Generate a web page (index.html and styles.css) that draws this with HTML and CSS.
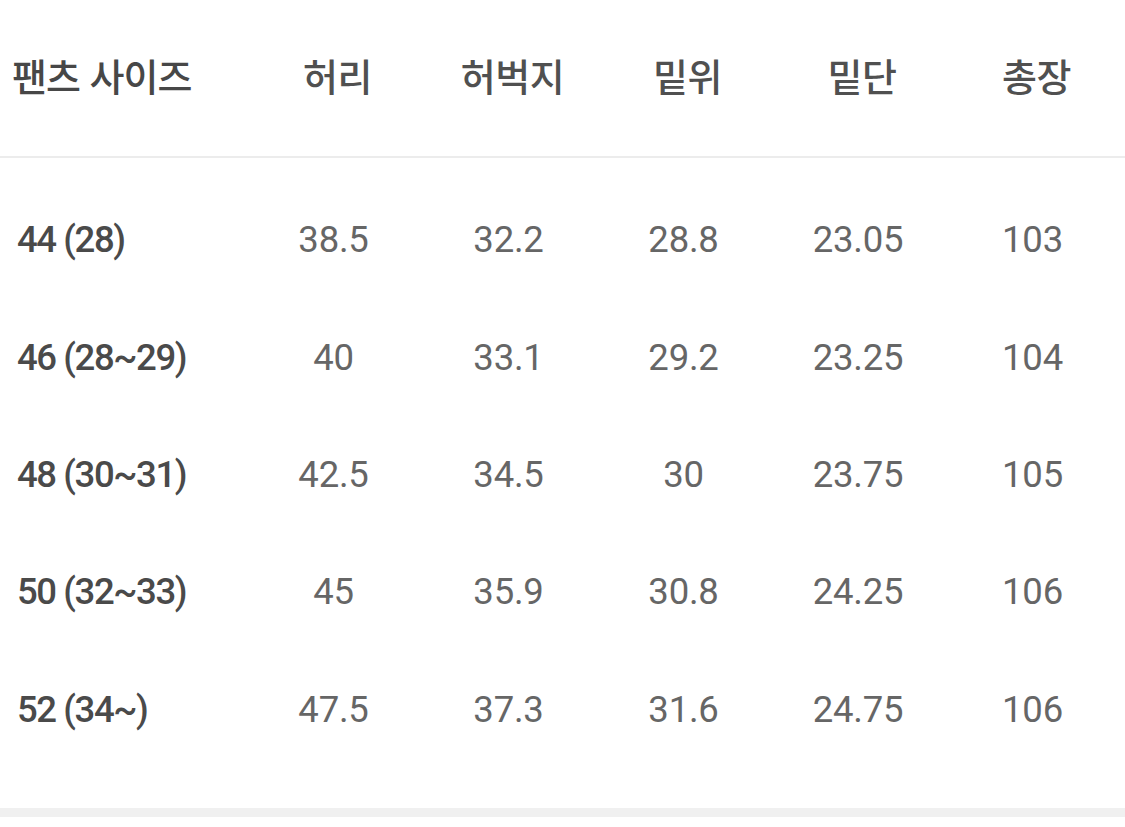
FILE: index.html
```html
<!DOCTYPE html>
<html lang="ko">
<head>
<meta charset="utf-8">
<title>팬츠 사이즈</title>
<link rel="stylesheet" href="styles.css">
</head>
<body>
<div class="page">
  <div class="size-table">
    <div class="row head">
      <div class="cell first">팬츠 사이즈</div>
      <div class="cell">허리</div>
      <div class="cell">허벅지</div>
      <div class="cell">밑위</div>
      <div class="cell">밑단</div>
      <div class="cell">총장</div>
    </div>
    <div class="body">
      <div class="row">
        <div class="cell first">44 (28)</div>
        <div class="cell">38.5</div>
        <div class="cell">32.2</div>
        <div class="cell">28.8</div>
        <div class="cell">23.05</div>
        <div class="cell">103</div>
      </div>
      <div class="row">
        <div class="cell first">46 (28~29)</div>
        <div class="cell">40</div>
        <div class="cell">33.1</div>
        <div class="cell">29.2</div>
        <div class="cell">23.25</div>
        <div class="cell">104</div>
      </div>
      <div class="row">
        <div class="cell first">48 (30~31)</div>
        <div class="cell">42.5</div>
        <div class="cell">34.5</div>
        <div class="cell">30</div>
        <div class="cell">23.75</div>
        <div class="cell">105</div>
      </div>
      <div class="row">
        <div class="cell first">50 (32~33)</div>
        <div class="cell">45</div>
        <div class="cell">35.9</div>
        <div class="cell">30.8</div>
        <div class="cell">24.25</div>
        <div class="cell">106</div>
      </div>
      <div class="row">
        <div class="cell first">52 (34~)</div>
        <div class="cell">47.5</div>
        <div class="cell">37.3</div>
        <div class="cell">31.6</div>
        <div class="cell">24.75</div>
        <div class="cell">106</div>
      </div>
    </div>
  </div>
  <div class="band"></div>
</div>
</body>
</html>
```

FILE: styles.css
```css
html, body {
  margin: 0;
  padding: 0;
  background: #ffffff;
}

.page {
  width: 1125px;
  height: 827px;
  overflow: hidden;
  font-family: Roboto, "Noto Sans CJK KR", sans-serif;
  color: #666666;
}

.size-table {
  display: flex;
  flex-direction: column;
}

.row {
  display: grid;
  grid-template-columns: 246px 175px 175px 175px 174px 175px;
  align-items: center;
  height: 117.4px;
}

.cell {
  text-align: center;
  font-size: 36.5px;
  letter-spacing: -0.2px;
  white-space: nowrap;
}

.cell.first {
  text-align: left;
  padding-left: 17px;
  font-weight: 500;
  font-size: 36.5px;
  letter-spacing: -1.4px;
  color: #4a4a4a;
}

.row.head {
  height: 158px;
  border-bottom: 2px solid #ececec;
  box-sizing: border-box;
  padding-bottom: 8px;
}

.row.head .cell {
  font-family: "Noto Sans CJK KR", sans-serif;
  font-size: 38px;
  font-weight: 500;
  color: #505050;
  padding-left: 8px;
  letter-spacing: -0.5px;
}

.row.head .cell.first {
  color: #474747;
  padding-left: 12px;
  letter-spacing: -1px;
}

.body {
  padding-top: 23px;
}

.band {
  margin-top: 40px;
  height: 9px;
  background: #f0f0f0;
}
```
